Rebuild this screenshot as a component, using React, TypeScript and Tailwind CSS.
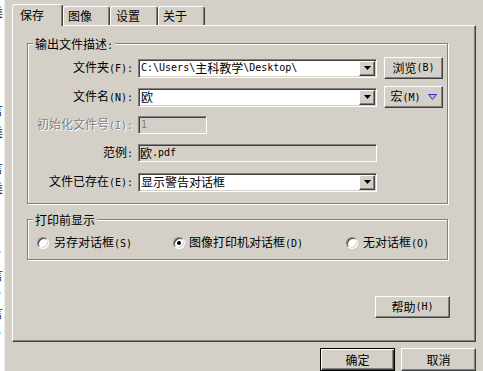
import React from "react";

// win classic 3d edges
const RAISED =
  "border border-t-white border-l-white border-r-[#404040] border-b-[#404040] shadow-[inset_-1px_-1px_0_#808080] bg-[#d4d0c8]";
const SUNKEN =
  "border border-t-[#808080] border-l-[#808080] border-r-white border-b-white shadow-[inset_1px_1px_0_#404040,inset_-1px_-1px_0_#d4d0c8] p-[1px]";
const ETCHED = "border border-[#808080] shadow-[1px_1px_0_#fff,inset_1px_1px_0_#fff]";

// ascii runs get the narrow mono face, like SimSun half-width glyphs
function Txt({ s }: { s: string }) {
  const parts = s.match(/[\x00-\x7f]+|[^\x00-\x7f]+/g) ?? [];
  return (
    <>
      {parts.map((p, i) =>
        /^[\x00-\x7f]+$/.test(p) ? (
          <span key={i} className="font-['DejaVu_Sans_Mono',monospace] text-[10px] whitespace-pre">
            {p}
          </span>
        ) : (
          <span key={i}>{p}</span>
        )
      )}
    </>
  );
}

function DropBtn() {
  return (
    <div className={`${RAISED} w-[16px] h-full flex items-center justify-center`}>
      <svg width="7" height="4" viewBox="0 0 7 4">
        <polygon points="0,0 7,0 3.5,4" fill="#000" />
      </svg>
    </div>
  );
}

function Combo({ value }: { value: string }) {
  return (
    <div className={`${SUNKEN} w-[239px] h-[19px] bg-white flex`}>
      <div className="flex-1 flex items-center pl-[1px] overflow-hidden">
        <Txt s={value} />
      </div>
      <DropBtn />
    </div>
  );
}

function Button({ label, className }: { label: React.ReactNode; className: string }) {
  return <div className={`${RAISED} ${className} flex items-center justify-center`}>{label}</div>;
}

function Label({ s, disabled }: { s: string; disabled?: boolean }) {
  return (
    <div
      className={
        disabled
          ? "w-[105px] text-right text-[#808080] [text-shadow:1px_1px_0_#fff]"
          : "w-[105px] text-right"
      }
    >
      <Txt s={s} />
    </div>
  );
}

function Radio({ checked }: { checked?: boolean }) {
  return (
    <div className="w-[12px] h-[12px] rounded-full border border-t-[#808080] border-l-[#808080] border-r-white border-b-white shadow-[inset_1px_1px_0_#404040,inset_-1px_-1px_0_#d4d0c8] bg-white flex items-center justify-center">
      {checked && <div className="w-[4px] h-[4px] rounded-full bg-black" />}
    </div>
  );
}

function BackStrip() {
  // fragments of the window behind the dialog
  return (
    <div className="w-[4px] h-full bg-white overflow-hidden flex flex-col pt-[5px] text-[#222]">
      <span className="-ml-[9px] h-[14px]">类</span>
      <span className="-ml-[9px] h-[14px] mt-[84px]">言</span>
      <span className="-ml-[9px] h-[14px] mt-[8px]">类</span>
      <span className="-ml-[9px] h-[14px] mt-[22px]">言</span>
      <span className="-ml-[9px] h-[14px] mt-[6px]">类</span>
      <span className="-ml-[9px] h-[14px] mt-[11px]">n</span>
      <span className="-ml-[9px] h-[14px] mt-[6px]">n</span>
      <span className="-ml-[9px] h-[14px] mt-[6px]">w</span>
      <span className="-ml-[9px] h-[14px] mt-[8px]">言</span>
      <span className="-ml-[9px] h-[14px] mt-[5px]">w</span>
      <span className="-ml-[9px] h-[14px] mt-[5px]">言</span>
      <span className="-ml-[9px] h-[14px] mt-[7px]">w</span>
    </div>
  );
}

export default function App() {
  return (
    <div className="w-[483px] h-[371px] overflow-hidden bg-[#d4d0c8] flex font-['Noto_Sans_CJK_SC','Noto_Sans',sans-serif] text-[12px] leading-[14px] text-black">
      <BackStrip />
      <div className="w-[1px] h-full bg-[#ecebe6]" />

      <div className="flex flex-col pl-[7px] pt-[4px]">
        {/* tabs */}
        <div className="relative z-10 h-[22px] -mb-[1px] flex items-end">
          <div className="w-[51px] h-[22px] bg-[#d4d0c8] rounded-t-[3px] border-t border-l border-r border-t-white border-l-white border-r-[#404040] shadow-[inset_-1px_0_0_#808080] pl-[7px] pt-[3px]">
            保存
          </div>
          <div className="w-[47px] h-[19px] mb-[1px] rounded-t-[3px] border-t border-l border-r border-t-white border-l-white border-r-[#404040] shadow-[inset_-1px_0_0_#808080] pl-[4px] pt-[2px]">
            图像
          </div>
          <div className="w-[48px] h-[19px] mb-[1px] rounded-t-[3px] border-t border-l border-r border-t-white border-l-white border-r-[#404040] shadow-[inset_-1px_0_0_#808080] pl-[5px] pt-[2px]">
            设置
          </div>
          <div className="w-[47px] h-[19px] mb-[1px] rounded-t-[3px] border-t border-l border-r border-t-white border-l-white border-r-[#404040] shadow-[inset_-1px_0_0_#808080] pl-[4px] pt-[2px]">
            关于
          </div>
        </div>

        {/* tab page */}
        <div className="w-[464px] h-[321px] border border-t-white border-l-white border-r-[#404040] border-b-[#404040] shadow-[inset_-1px_-1px_0_#808080] pl-[14px] pt-[17px] flex flex-col">
          {/* output file group */}
          <div className={`relative ${ETCHED} w-[421px] h-[161px] pt-[13px] flex flex-col`}>
            <div className="absolute left-[5px] -top-[7px] bg-[#d4d0c8] px-[2px]">
              <Txt s="输出文件描述:" />
            </div>

            <div className="h-[22px] flex items-center">
              <Label s="文件夹(F):" />
              <div className="ml-[5px]">
                <Combo value={"C:\\Users\\主科教学\\Desktop\\"} />
              </div>
              <Button className="ml-[7px] w-[59px] h-[22px]" label={<Txt s="浏览(B)" />} />
            </div>

            <div className="mt-[7px] h-[22px] flex items-center">
              <Label s="文件名(N):" />
              <div className="ml-[5px]">
                <Combo value="欧" />
              </div>
              <Button
                className="ml-[7px] w-[59px] h-[22px] gap-[7px]"
                label={
                  <>
                    <span>
                      <Txt s="宏(M)" />
                    </span>
                    <svg width="9" height="6" viewBox="0 0 9 6">
                      <polygon points="0.5,0.5 8.5,0.5 4.5,5.5" fill="#b8b8f0" stroke="#3030b8" strokeWidth="1" />
                    </svg>
                  </>
                }
              />
            </div>

            <div className="mt-[7px] h-[20px] flex items-center">
              <Label s="初始化文件号(I):" disabled />
              <div className={`ml-[5px] ${SUNKEN} w-[69px] h-[18px] bg-[#d4d0c8] flex items-center pl-[2px] text-[#808080]`}>
                <Txt s="1" />
              </div>
            </div>

            <div className="mt-[8px] h-[20px] flex items-center">
              <Label s="范例:" />
              <div className={`ml-[5px] ${SUNKEN} w-[239px] h-[18px] bg-[#d4d0c8] flex items-center pl-[1px]`}>
                <Txt s="欧.pdf" />
              </div>
            </div>

            <div className="mt-[9px] h-[20px] flex items-center">
              <Label s="文件已存在(E):" />
              <div className="ml-[5px]">
                <Combo value="显示警告对话框" />
              </div>
            </div>
          </div>

          {/* before-print group */}
          <div className={`relative ${ETCHED} mt-[15px] w-[421px] h-[41px] pt-[16px] pl-[9px]`}>
            <div className="absolute left-[5px] -top-[7px] bg-[#d4d0c8] px-[2px]">打印前显示</div>
            <div className="h-[14px] flex items-center">
              <div className="w-[136px] flex items-center">
                <Radio />
                <span className="ml-[5px]">
                  <Txt s="另存对话框(S)" />
                </span>
              </div>
              <div className="w-[173px] flex items-center">
                <Radio checked />
                <span className="ml-[4px]">
                  <Txt s="图像打印机对话框(D)" />
                </span>
              </div>
              <div className="flex items-center">
                <Radio />
                <span className="ml-[5px]">
                  <Txt s="无对话框(O)" />
                </span>
              </div>
            </div>
          </div>

          <div className="mt-[36px] w-[423px] flex justify-end">
            <Button className="w-[75px] h-[22px]" label={<Txt s="帮助(H)" />} />
          </div>
        </div>

        {/* dialog buttons */}
        <div className="mt-[6px] w-[464px] flex justify-end gap-[6px]">
          <div className="w-[75px] h-[23px] border border-black shadow-[inset_1px_1px_0_#fff,inset_-1px_-1px_0_#404040,inset_-2px_-2px_0_#808080] bg-[#d4d0c8] flex items-center justify-center">
            确定
          </div>
          <Button className="w-[75px] h-[23px]" label="取消" />
        </div>
      </div>
    </div>
  );
}
